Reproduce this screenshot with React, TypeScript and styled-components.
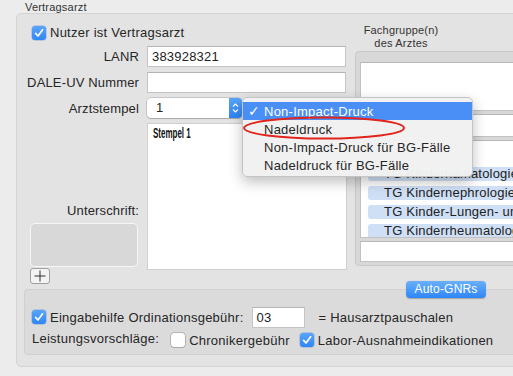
import React from "react";
import styled, { createGlobalStyle } from "styled-components";

const GlobalStyle = createGlobalStyle`
  html, body { margin: 0; padding: 0; background: #ececec; }
  body { font-family: "Liberation Sans", Arial, sans-serif; color: #262626; }
  * { box-sizing: border-box; }
`;

const Page = styled.div`
  position: relative;
  width: 513px;
  height: 376px;
  overflow: hidden;
  background: #ececec;
`;

const GroupTitle = styled.div`
  height: 13px;
  padding: 1px 0 0 25px;
  font-size: 11px;
  line-height: 12px;
  color: #333;
  letter-spacing: 0.2px;
`;

const GroupBox = styled.div`
  margin-left: 16px;
  width: 520px;
  height: 354px;
  background: #e3e3e3;
  border: 1px solid #d4d4d4;
  border-radius: 5px;
  display: flex;
  flex-direction: column;
`;

const TopArea = styled.div`
  display: flex;
  align-items: flex-start;
  padding-top: 10px;
`;

const FormGrid = styled.div`
  display: grid;
  grid-template-columns: 122px 200px;
  grid-template-rows: 17px 21px 21px 20px auto;
  column-gap: 8px;
  row-gap: 5px;
  align-items: center;
`;

const CheckRow = styled.label`
  grid-column: 1 / -1;
  display: flex;
  align-items: center;
  gap: 4px;
  padding-left: 15px;
  font-size: 13px;
  letter-spacing: 0.25px;
`;

const FieldLabel = styled.div`
  text-align: right;
  font-size: 13px;
  letter-spacing: 0.15px;
  white-space: nowrap;
`;

const TextInput = styled.div<{ $width?: number }>`
  width: ${(p) => p.$width ?? 199}px;
  height: 21px;
  background: #fff;
  border: 1px solid #c4c4c4;
  border-top-color: #b4b4b4;
  padding-left: 4px;
  font-size: 13px;
  line-height: 19px;
  letter-spacing: 0.2px;
  color: #222;
`;

const Popup = styled.div`
  width: 95px;
  height: 20px;
  display: flex;
  background: #fff;
  border-radius: 4px;
  box-shadow: 0 0 0 0.5px rgba(0, 0, 0, 0.25), 0 1px 1px rgba(0, 0, 0, 0.15);
  overflow: hidden;
`;

const PopupValue = styled.div`
  flex: 1;
  padding-left: 9px;
  font-size: 13px;
  line-height: 20px;
`;

const Stepper = styled.div`
  width: 13px;
  background: linear-gradient(#5aa4fa, #2d85f5);
  display: flex;
  align-items: center;
  justify-content: center;
`;

const StampArea = styled.div`
  align-self: start;
  width: 200px;
  height: 147px;
  background: #fff;
  border: 1px solid #cfcfcf;
  padding: 1px 5px;
`;

const StampText = styled.div`
  font-family: "Liberation Sans", Arial, sans-serif;
  font-weight: bold;
  font-size: 14px;
  line-height: 16px;
  color: #111;
  white-space: nowrap;
  transform: scaleX(0.57);
  transform-origin: left center;
`;

const SignatureCell = styled.div`
  align-self: start;
  display: flex;
  flex-direction: column;
  align-items: flex-start;
  padding-top: 80px;
`;

const SignatureLabel = styled(FieldLabel)`
  align-self: stretch;
  line-height: 16px;
`;

const SignatureBox = styled.div`
  margin: 4px 0 0 13px;
  width: 108px;
  height: 44px;
  background: #d8d8d8;
  border: 1.5px solid #f6f6f6;
  border-radius: 5px;
`;

const PlusButton = styled.div`
  margin: 1px 0 0 13px;
  width: 20px;
  height: 16px;
  border: 1px solid #a0a0a0;
  border-radius: 3px;
  background: #f3f3f3;
  display: flex;
  align-items: center;
  justify-content: center;
`;

const RightColumn = styled.div`
  margin-left: 8px;
  width: 180px;
  display: flex;
  flex-direction: column;
`;

const ColumnHeader = styled.div`
  width: 92px;
  height: 27px;
  text-align: center;
  font-size: 11px;
  line-height: 13px;
  color: #333;
  letter-spacing: 0.2px;
`;

const ListFrame = styled.div`
  height: 215px;
  background: #d8d8d8;
  border: 1px solid #c8c8c8;
  border-radius: 4px;
  padding: 10px 0 0 4px;
  display: flex;
  flex-direction: column;
  gap: 3px;
`;

const WhitePane = styled.div<{ $height: number }>`
  height: ${(p) => p.$height}px;
  background: #fff;
  border: 1px solid #c2c2c2;
  border-top-color: #b8b8b8;
  overflow: hidden;
`;

const TagList = styled(WhitePane)`
  padding: 26px 0 0 7px;
  display: flex;
  flex-direction: column;
  gap: 5px;
`;

const Tag = styled.div`
  flex: none;
  height: 14px;
  width: 200px;
  background: #cfe0f6;
  border-radius: 3px;
  padding-left: 16px;
  font-size: 13px;
  line-height: 14px;
  white-space: nowrap;
  color: #222;
  letter-spacing: 0.2px;
`;

const BottomSection = styled.div`
  position: relative;
  margin: 5px 0 0 7px;
  width: 520px;
  height: 66px;
  background: #dbdbdb;
  border: 1px solid #d0d0d0;
  border-radius: 4px;
  padding: 16px 0 0 7px;
  display: flex;
  flex-direction: column;
  gap: 3px;
`;

const AutoButton = styled.div`
  position: absolute;
  left: 381px;
  top: -9px;
  width: 80px;
  height: 17px;
  border-radius: 4px;
  background: linear-gradient(#6ab0fb, #2e86f6);
  box-shadow: 0 0.5px 1px rgba(0, 0, 0, 0.25);
  color: #fff;
  font-size: 12px;
  line-height: 17px;
  text-align: center;
  letter-spacing: 0.2px;
`;

const OptionRow = styled.div<{ $height: number }>`
  height: ${(p) => p.$height}px;
  display: flex;
  align-items: center;
  font-size: 13px;
  letter-spacing: 0.25px;
  white-space: nowrap;
`;

const OptionItem = styled.label<{ $gapBefore?: number }>`
  display: flex;
  align-items: center;
  gap: 4px;
  margin-left: ${(p) => p.$gapBefore ?? 0}px;
`;

const RowText = styled.span<{ $gapBefore?: number; $lift?: number }>`
  margin-left: ${(p) => p.$gapBefore ?? 0}px;
  margin-bottom: ${(p) => p.$lift ?? 0}px;
`;

const Box = styled.span<{ $checked: boolean }>`
  width: 14px;
  height: 14px;
  flex: none;
  border-radius: 3px;
  display: inline-flex;
  align-items: center;
  justify-content: center;
  background: ${(p) => (p.$checked ? "linear-gradient(#5aa5fb, #2f86f6)" : "#fff")};
  box-shadow: ${(p) =>
    p.$checked ? "0 0 0 0.5px rgba(30,90,200,0.4)" : "0 0 0 0.5px rgba(0,0,0,0.35), 0 1px 1px rgba(0,0,0,0.08)"};
`;

const Menu = styled.div`
  position: absolute;
  left: 242px;
  top: 97px;
  width: 231px;
  height: 80px;
  padding: 4px 0;
  background: rgba(241, 241, 241, 0.98);
  border: 0.5px solid #c4c4c4;
  border-radius: 5px;
  box-shadow: 0 5px 14px rgba(0, 0, 0, 0.25);
`;

const MenuItem = styled.div<{ $active?: boolean }>`
  height: 18px;
  display: flex;
  align-items: center;
  padding-left: 5px;
  font-size: 13px;
  letter-spacing: 0.25px;
  color: ${(p) => (p.$active ? "#fff" : "#262626")};
  background: ${(p) => (p.$active ? "#4a8ff6" : "transparent")};
  white-space: nowrap;
`;

const MenuCheck = styled.span`
  width: 16px;
  font-size: 14px;
`;

const Marker = styled.svg`
  position: absolute;
  left: 238px;
  top: 112px;
`;

function CheckBox({ checked }: { checked: boolean }) {
  return (
    <Box $checked={checked}>
      {checked && (
        <svg width="10" height="10" viewBox="0 0 10 10">
          <polyline points="1.6,5.4 4,8 8.6,1.8" fill="none" stroke="#fff" strokeWidth="1.7" strokeLinecap="round" strokeLinejoin="round" />
        </svg>
      )}
    </Box>
  );
}

const tags = [
  "TG Kinderhämatologie und -onkologie",
  "TG Kindernephrologie",
  "TG Kinder-Lungen- und Bronchialheilkunde",
  "TG Kinderrheumatologie",
];

const menuItems = ["Non-Impact-Druck", "Nadeldruck", "Non-Impact-Druck für BG-Fälle", "Nadeldruck für BG-Fälle"];

export default function App() {
  return (
    <Page>
      <GlobalStyle />
      <GroupTitle>Vertragsarzt</GroupTitle>
      <GroupBox>
        <TopArea>
          <FormGrid>
            <CheckRow>
              <CheckBox checked />
              Nutzer ist Vertragsarzt
            </CheckRow>
            <FieldLabel>LANR</FieldLabel>
            <TextInput>383928321</TextInput>
            <FieldLabel>DALE-UV Nummer</FieldLabel>
            <TextInput />
            <FieldLabel>Arztstempel</FieldLabel>
            <Popup>
              <PopupValue>1</PopupValue>
              <Stepper>
                <svg width="7" height="12" viewBox="0 0 7 12">
                  <polyline points="1,4.5 3.5,2 6,4.5" fill="none" stroke="#fff" strokeWidth="1.2" />
                  <polyline points="1,7.5 3.5,10 6,7.5" fill="none" stroke="#fff" strokeWidth="1.2" />
                </svg>
              </Stepper>
            </Popup>
            <SignatureCell>
              <SignatureLabel>Unterschrift:</SignatureLabel>
              <SignatureBox />
              <PlusButton>
                <svg width="12" height="12" viewBox="0 0 12 12">
                  <path d="M6 0.5V11.5M0.5 6H11.5" stroke="#333" strokeWidth="1" />
                </svg>
              </PlusButton>
            </SignatureCell>
            <StampArea>
              <StampText>Stempel 1</StampText>
            </StampArea>
          </FormGrid>
          <RightColumn>
            <ColumnHeader>
              Fachgruppe(n)
              <br />
              des Arztes
            </ColumnHeader>
            <ListFrame>
              <WhitePane $height={49} />
              <WhitePane $height={23} />
              <TagList $height={98}>
                {tags.map((t) => (
                  <Tag key={t}>{t}</Tag>
                ))}
              </TagList>
              <WhitePane $height={21} />
            </ListFrame>
          </RightColumn>
        </TopArea>
        <BottomSection>
          <AutoButton>Auto-GNRs</AutoButton>
          <OptionRow $height={22}>
            <OptionItem>
              <CheckBox checked />
              Eingabehilfe Ordinationsgebühr:
            </OptionItem>
            <RowText $gapBefore={8}>
              <TextInput $width={53}>03</TextInput>
            </RowText>
            <RowText $gapBefore={14}>= Hausarztpauschalen</RowText>
          </OptionRow>
          <OptionRow $height={18}>
            <RowText $lift={3}>Leistungsvorschläge:</RowText>
            <OptionItem $gapBefore={12}>
              <CheckBox checked={false} />
              Chronikergebühr
            </OptionItem>
            <OptionItem $gapBefore={10}>
              <CheckBox checked />
              Labor-Ausnahmeindikationen
            </OptionItem>
          </OptionRow>
        </BottomSection>
      </GroupBox>
      <Menu>
        {menuItems.map((m, i) => (
          <MenuItem key={m} $active={i === 0}>
            <MenuCheck>{i === 0 ? "✓" : ""}</MenuCheck>
            {m}
          </MenuItem>
        ))}
      </Menu>
      <Marker width="172" height="30" viewBox="0 0 172 30">
        <ellipse cx="86" cy="16" rx="80" ry="10.5" fill="none" stroke="#e2251c" strokeWidth="2" />
      </Marker>
    </Page>
  );
}
